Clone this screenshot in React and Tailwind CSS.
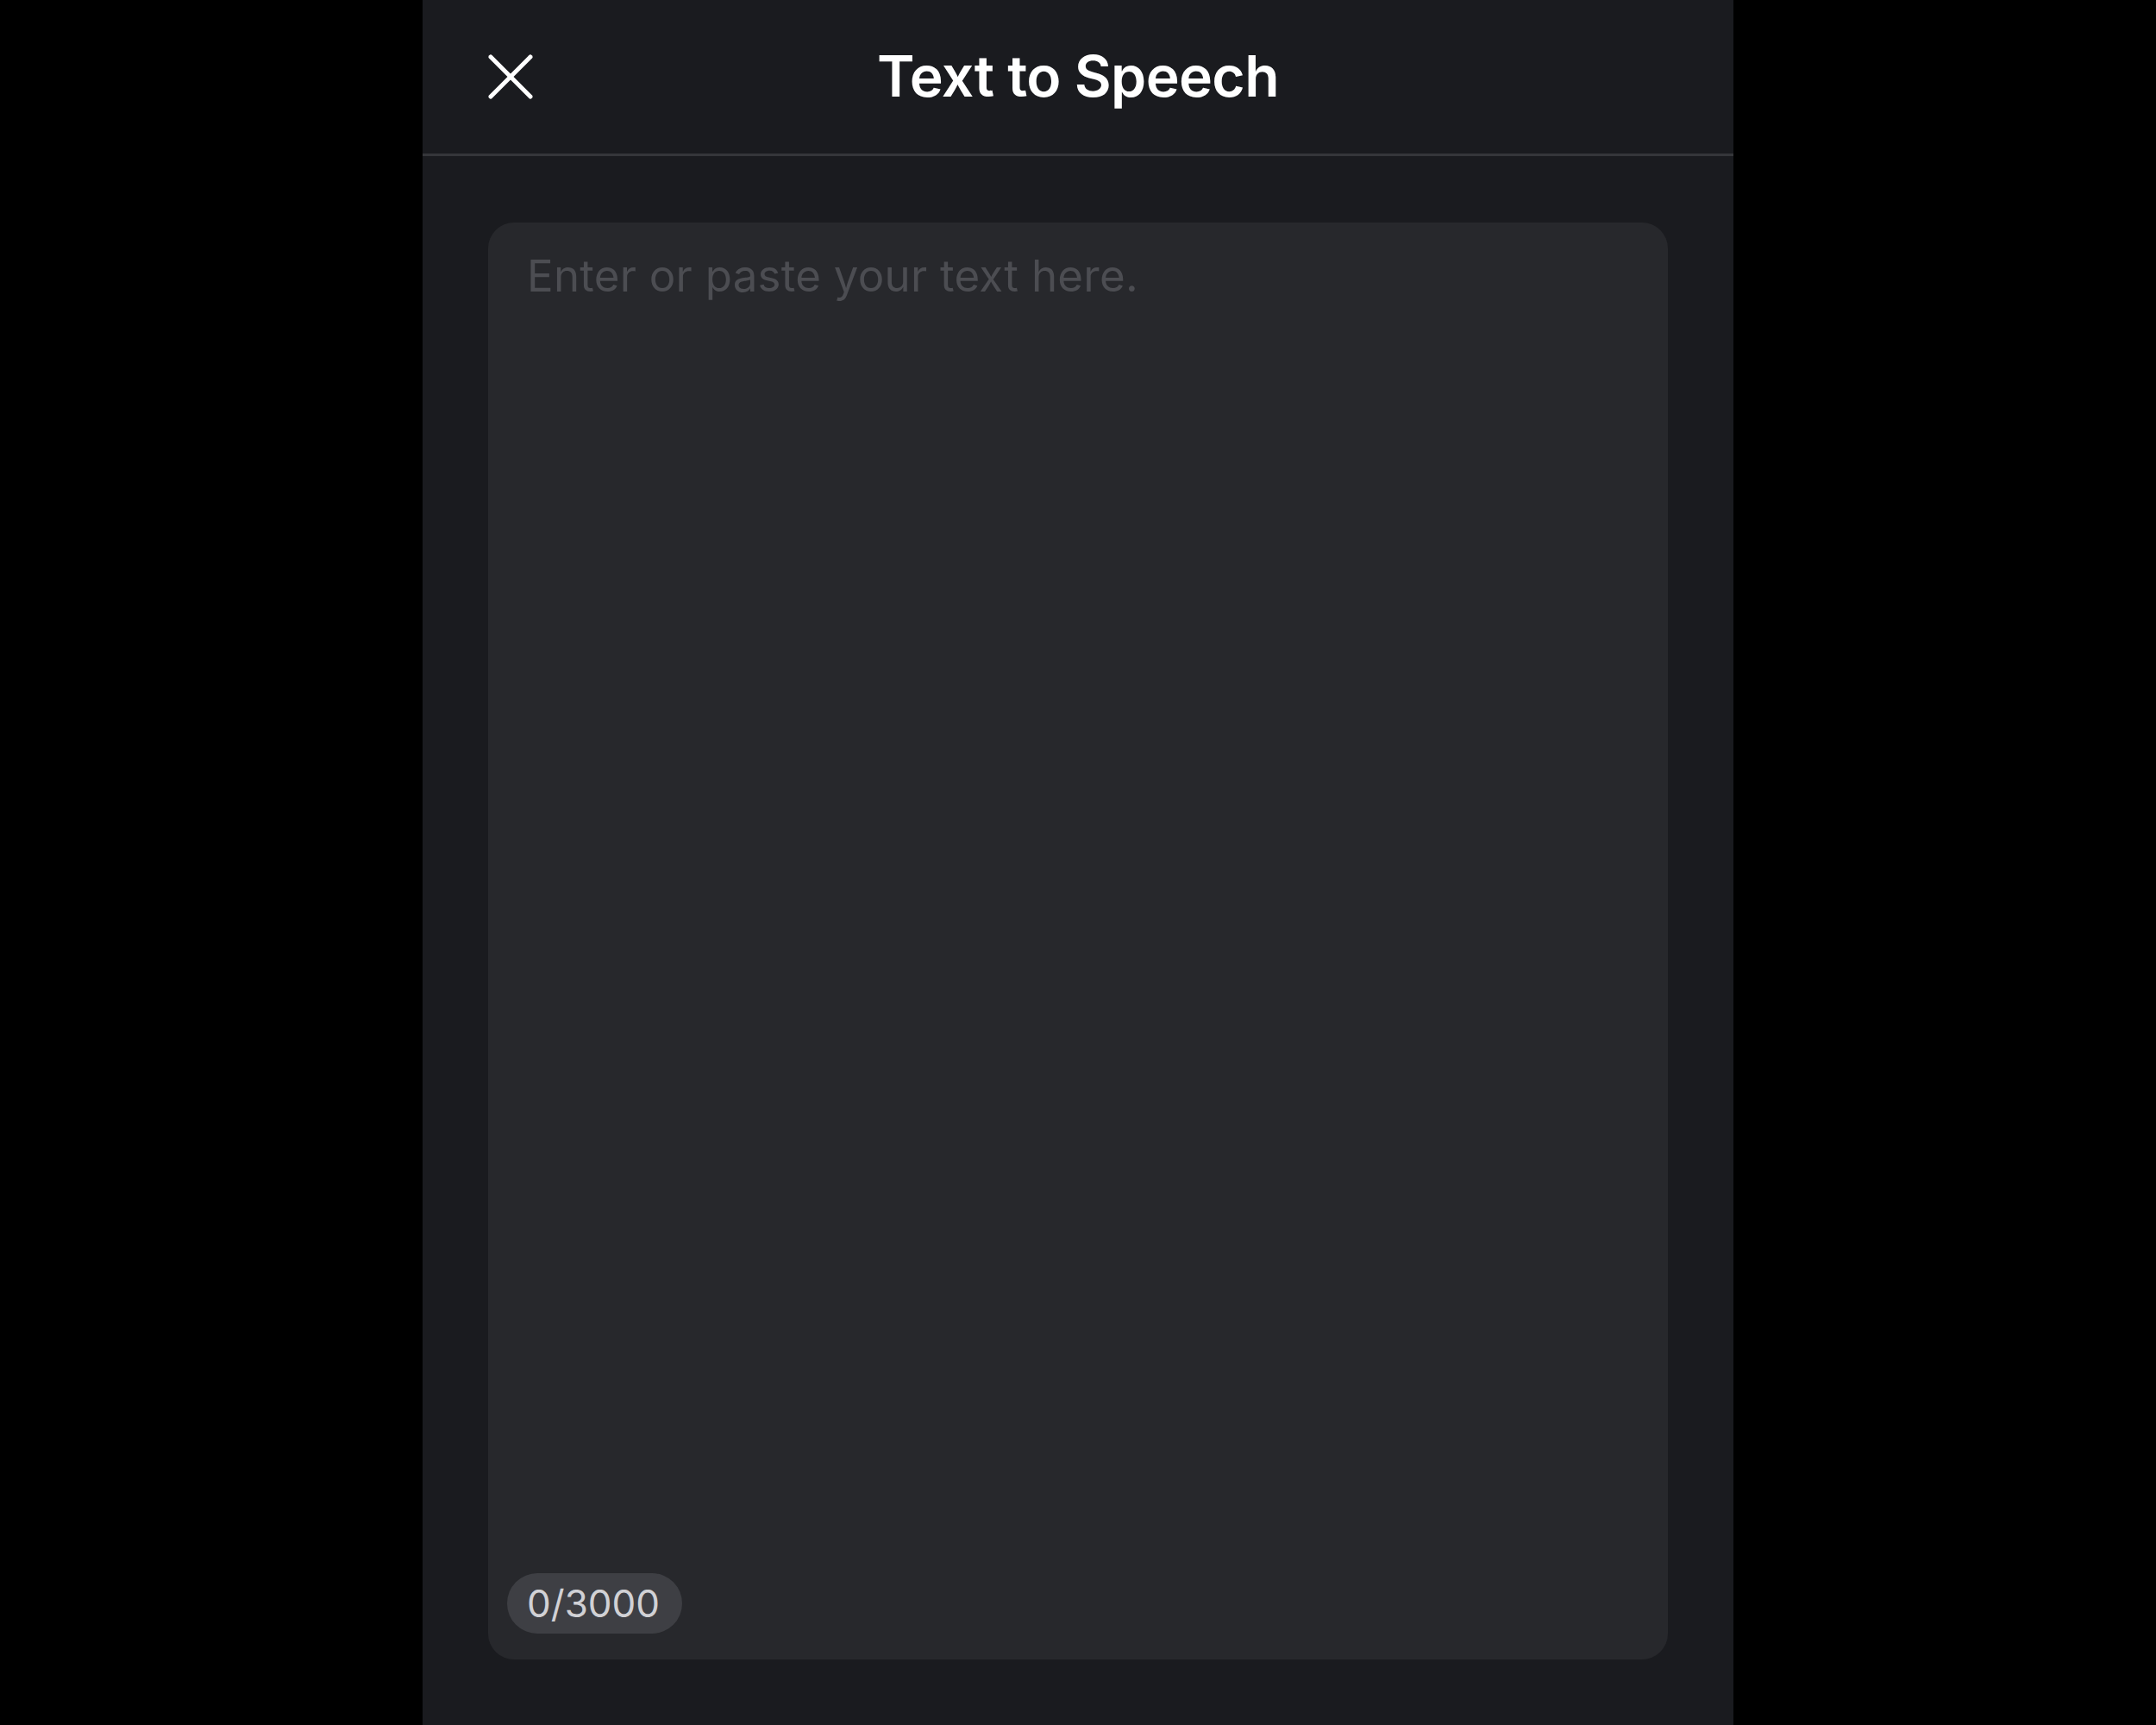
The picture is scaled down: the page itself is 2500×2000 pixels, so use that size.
import { useState } from "react";

const FONT = { fontFamily: "Inter, 'Noto Sans', 'Liberation Sans', sans-serif" };
const MAX_CHARS = 3000;

function CloseIcon() {
  return (
    <svg width="52" height="52" viewBox="0 0 52 52" fill="none" stroke="currentColor" strokeWidth="5" strokeLinecap="round">
      <path d="M3 3 L49 49" />
      <path d="M49 3 L3 49" />
    </svg>
  );
}

export default function App() {
  const [text, setText] = useState("");

  return (
    <div className="w-full min-h-screen bg-black flex justify-center" style={FONT}>
      <div className="w-[1520px] h-[2000px] bg-[#1a1b1f] flex flex-col">
        <header className="relative h-[181px] shrink-0 flex items-center justify-center border-b-[3px] border-[#35363a]">
          <button className="absolute left-[76px] top-[63px] text-white">
            <CloseIcon />
          </button>
          <h1 className="text-[66px] font-semibold text-white tracking-[-0.01em] leading-none mt-[-3px]">
            Text to Speech
          </h1>
        </header>

        <div className="flex-1 flex flex-col px-[76px] pt-[77px] pb-[76px]">
          <div className="flex-1 flex flex-col rounded-[30px] bg-[#27282c]">
            <textarea
              value={text}
              onChange={(e) => setText(e.target.value.slice(0, MAX_CHARS))}
              placeholder="Enter or paste your text here."
              className="flex-1 w-full resize-none bg-transparent outline-none px-[45px] pt-[31px] text-[51px] leading-[62px] tracking-[0.005em] text-white placeholder:text-[#4c4d52]"
            />
            <div className="pl-[22px] pb-[30px]">
              <span className="inline-flex items-center h-[70px] pl-[23px] pr-[26px] rounded-full bg-[#3e3f44] text-[44px] text-[#d1d1d5] leading-none">
                {text.length}/{MAX_CHARS}
              </span>
            </div>
          </div>
        </div>
      </div>
    </div>
  );
}
